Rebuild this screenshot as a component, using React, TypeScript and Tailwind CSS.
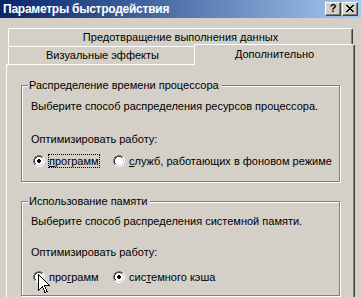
import React from "react";

const OUTER = [
  "....xxxx....",
  "..xx....xx..",
  ".x........x.",
  ".x........x.",
  "x..........x",
  "x..........x",
  "x..........x",
  "x..........x",
  ".x........x.",
  ".x........x.",
  "..xx....xx..",
  "....xxxx....",
];
const INNER = [
  "............",
  "....xxxx....",
  "..xx....xx..",
  "..x......x..",
  ".x........x.",
  ".x........x.",
  ".x........x.",
  ".x........x.",
  "..x......x..",
  "..xx....xx..",
  "....xxxx....",
  "............",
];
const FILL = [
  "............",
  "............",
  "....xxxx....",
  "...xxxxxx...",
  "..xxxxxxxx..",
  "..xxxxxxxx..",
  "..xxxxxxxx..",
  "..xxxxxxxx..",
  "...xxxxxx...",
  "....xxxx....",
  "............",
  "............",
];
const DOT = [
  "............",
  "............",
  "............",
  "............",
  ".....xx.....",
  "....xxxx....",
  "....xxxx....",
  ".....xx.....",
  "............",
  "............",
  "............",
  "............",
];
const XGLYPH = [
  "xx....xx",
  ".xx..xx.",
  "..xxxx..",
  "...xx...",
  "..xxxx..",
  ".xx..xx.",
  "xx....xx",
];

function pixels(rows: string[], color: (x: number, y: number) => string, key: string) {
  const out: React.ReactElement[] = [];
  rows.forEach((row, y) => {
    for (let x = 0; x < row.length; x++) {
      if (row[x] === "x") {
        out.push(<rect key={`${key}-${x}-${y}`} x={x} y={y} width={1} height={1} fill={color(x, y)} />);
      }
    }
  });
  return out;
}

function Radio({ checked }: { checked: boolean }) {
  return (
    <svg width={12} height={12} viewBox="0 0 12 12" shapeRendering="crispEdges" className="shrink-0 block">
      {pixels(FILL, () => "#FFFFFF", "f")}
      {pixels(OUTER, (x, y) => (x + y <= 10 ? "#808080" : "#FFFFFF"), "o")}
      {pixels(INNER, (x, y) => (x + y <= 10 ? "#404040" : "#D4D0C8"), "i")}
      {checked && pixels(DOT, () => "#000000", "d")}
    </svg>
  );
}

function Group({ label, className, children }: { label: string; className: string; children: React.ReactNode }) {
  return (
    <div
      className={
        "relative w-[319px] border border-[#808080] shadow-[inset_1px_1px_0_#ffffff,1px_1px_0_#ffffff] " + className
      }
    >
      <span className="absolute left-[6px] top-[-7px] bg-[#D4D0C8] pl-[1px] pr-[3px] whitespace-nowrap">{label}</span>
      {children}
    </div>
  );
}

function CaptionButton({ children, className }: { children: React.ReactNode; className?: string }) {
  return (
    <div
      className={
        "w-[16px] h-[14px] bg-[#D4D0C8] border-t border-l border-white border-b border-r border-b-[#404040] border-r-[#404040] shadow-[inset_-1px_-1px_0_#808080] flex items-center justify-center " +
        (className || "")
      }
    >
      {children}
    </div>
  );
}

export default function App() {
  return (
    <div className="relative w-[361px] h-[297px] overflow-hidden bg-[#D4D0C8] font-['Liberation_Sans',Arial,sans-serif] text-[11px] leading-[13px] text-black">
      {/* Title bar */}
      <div className="h-[18px] flex items-center bg-gradient-to-r from-[#0A246A] to-[#A6CAF0] pl-[3px] pr-[3px]">
        <span className="flex-1 text-white font-bold text-[12px] leading-[14px] tracking-[-0.25px] whitespace-nowrap">
          Параметры быстродействия
        </span>
        <CaptionButton>
          <span className="font-bold text-[11px] leading-[11px] text-black mt-[-1px]">?</span>
        </CaptionButton>
        <CaptionButton className="ml-[1px]">
          <svg width={8} height={7} viewBox="0 0 8 7" shapeRendering="crispEdges" className="block mt-[-1px]">
            {pixels(XGLYPH, () => "#000000", "x")}
          </svg>
        </CaptionButton>
      </div>

      <div className="pt-[10px]">
        {/* Tabs row 1 */}
        <div className="ml-[8px] w-[345px] h-[18px] border-l border-t border-white border-r border-r-[#404040] shadow-[inset_-1px_0_0_#808080] rounded-tl-[2px] rounded-tr-[2px] flex items-center justify-center whitespace-nowrap">
          Предотвращение выполнения данных
        </div>
        {/* Tabs row 2 */}
        <div className="flex items-end h-[18px]">
          <div className="ml-[8px] w-[188px] h-[18px] bg-[#D4D0C8] border-l border-t border-white rounded-tl-[2px] flex items-center justify-center whitespace-nowrap">
            Визуальные эффекты
          </div>
          <div className="relative z-10 ml-[-2px] w-[161px] h-[21px] mb-[-1px] bg-[#D4D0C8] border-l border-t border-white border-r border-r-[#404040] shadow-[inset_-1px_0_0_#808080] rounded-tl-[2px] rounded-tr-[2px] flex items-center justify-center pb-[1px] whitespace-nowrap">
            Дополнительно
          </div>
        </div>

        {/* Panel */}
        <div className="ml-[6px] w-[349px] h-[260px] border-l border-t border-white border-r border-r-[#404040] shadow-[inset_-1px_0_0_#808080] pl-[14px] pt-[20px]">
          <Group label="Распределение времени процессора" className="h-[97px]">
            <div className="pl-[9px] pt-[14px]">
              <div className="whitespace-nowrap">Выберите способ распределения ресурсов процессора.</div>
              <div className="mt-[20px] whitespace-nowrap">Оптимизировать работу:</div>
              <div className="mt-[7px] h-[15px] flex items-center ml-[2px]">
                <div className="w-[80px] flex items-center">
                  <Radio checked />
                  <span className="ml-[3px] border border-dotted border-black leading-[12px] whitespace-nowrap">
                    <u>п</u>рограмм
                  </span>
                </div>
                <Radio checked={false} />
                <span className="ml-[3px] border border-transparent leading-[12px] whitespace-nowrap">
                  <u>с</u>лужб, работающих в фоновом режиме
                </span>
              </div>
            </div>
          </Group>

          <Group label="Использование памяти" className="h-[95px] mt-[19px]">
            <div className="pl-[9px] pt-[13px]">
              <div className="whitespace-nowrap">Выберите способ распределения системной памяти.</div>
              <div className="mt-[18px] whitespace-nowrap">Оптимизировать работу:</div>
              <div className="mt-[10px] h-[15px] flex items-center ml-[2px]">
                <div className="w-[80px] flex items-center">
                  <Radio checked={false} />
                  <span className="ml-[3px] border border-transparent leading-[12px] whitespace-nowrap">
                    про<u>г</u>рамм
                  </span>
                </div>
                <Radio checked />
                <span className="ml-[3px] border border-transparent leading-[12px] whitespace-nowrap">
                  сис<u>т</u>емного кэша
                </span>
              </div>
            </div>
          </Group>
        </div>
      </div>

      {/* Mouse cursor */}
      <svg
        width={13}
        height={21}
        viewBox="0 0 13 21"
        className="absolute left-[38px] top-[274px] z-20"
        shapeRendering="crispEdges"
      >
        <path
          d="M0.5 0.5 L0.5 16.5 L4.5 12.5 L7 18.5 L9 17.5 L6.5 11.5 L11.5 11.5 Z"
          fill="#FFFFFF"
          stroke="#000000"
          strokeWidth={1}
          strokeLinejoin="miter"
        />
      </svg>
    </div>
  );
}
